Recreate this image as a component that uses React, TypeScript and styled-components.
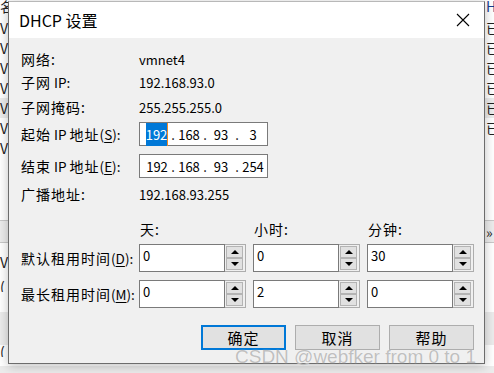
import React, { FC } from 'react';
import styled, { createGlobalStyle } from 'styled-components';

const GlobalStyle = createGlobalStyle`
  html, body {
    margin: 0;
    padding: 0;
    background: #f3f3f3;
  }
  body {
    font-family: "Noto Sans CJK SC", "Noto Sans", sans-serif;
    color: #000;
  }
`;

const UI_FONT = `"Noto Sans CJK SC", "Noto Sans", sans-serif`;

const Desktop = styled.div`
  position: relative;
  width: 494px;
  height: 373px;
  overflow: hidden;
  background: #ececec;
`;

// the list window behind the dialog, only its edges show
const Backdrop = styled.div`
  display: flex;
  flex-direction: column;
  margin-top: -6px;
  font-family: ${UI_FONT};
  font-size: 14px;
  background: #fff;
  height: 372px;
`;

const BackRow = styled.div<{ $h?: number; $shade?: boolean; $line?: boolean }>`
  display: grid;
  grid-template-columns: 486px 1fr;
  height: ${(p) => p.$h ?? 20}px;
  line-height: ${(p) => p.$h ?? 20}px;
  background: ${(p) => (p.$shade ? '#ececec' : 'transparent')};
  border-top: ${(p) => (p.$line ? '1px solid #c8c8c8' : 'none')};
  box-sizing: border-box;
  white-space: nowrap;
  overflow: hidden;
`;

const BackCell = styled.span<{ $blue?: boolean }>`
  color: ${(p) => (p.$blue ? '#1a3d8f' : '#222')};
  overflow: hidden;
`;

const Dialog = styled.div`
  position: absolute;
  left: 8px;
  top: 1px;
  width: 477px;
  height: 363px;
  box-sizing: border-box;
  border: 1px solid #6c6c6c;
  border-top-color: #b8b8b8;
  display: flex;
  flex-direction: column;
  background: #f0f0f0;
  box-shadow: 0 2px 10px rgba(0, 0, 0, 0.25);
  font-family: ${UI_FONT};
`;

const TitleBar = styled.div`
  height: 36px;
  background: #fff;
  display: flex;
  align-items: center;
  padding-left: 10px;
`;

const Title = styled.span`
  flex: 1;
  font-size: 16px;
  color: #000;
`;

const CloseButton = styled.div`
  width: 42px;
  height: 36px;
  display: flex;
  align-items: center;
  justify-content: center;
`;

const Body = styled.div`
  flex: 1;
  padding: 10px 10px 0 12px;
  display: flex;
  flex-direction: column;
`;

const Row = styled.div<{ $h: number; $mt?: number }>`
  display: grid;
  grid-template-columns: 118px 1fr;
  align-items: center;
  height: ${(p) => p.$h}px;
  margin-top: ${(p) => p.$mt ?? 0}px;
`;

const Label = styled.span`
  font-size: 14px;
  letter-spacing: 1px;
  white-space: nowrap;
`;

// latin parts of a label keep their natural spacing
const Lat = styled.span`
  letter-spacing: 0;
  font-size: 13.5px;
`;

const Value = styled.span`
  font-size: 13px;
`;

const Key = styled.u`
  text-underline-offset: 2px;
`;

const IpBox = styled.div`
  width: 129px;
  height: 24px;
  box-sizing: border-box;
  border: 1px solid #7a7a7a;
  background: #fff;
  display: flex;
  align-items: center;
  padding-left: 4px;
  font-size: 13px;
`;

const Octet = styled.span`
  width: 26px;
  text-align: center;
`;

const Dot = styled.span`
  width: 6px;
  text-align: center;
`;

const Selected = styled.span`
  background: #0078d7;
  color: #fff;
  padding: 2px 0;
  border-right: 1px solid #f08a24;
`;

const LeaseGrid = styled.div<{ $h: number; $mt: number }>`
  display: grid;
  grid-template-columns: 111px repeat(3, 107px);
  column-gap: 7px;
  align-items: center;
  height: ${(p) => p.$h}px;
  margin-top: ${(p) => p.$mt}px;
`;

const Head = styled.span`
  font-size: 14px;
  letter-spacing: 1px;
  padding-left: 1px;
`;

const SpinBox = styled.div`
  height: 28px;
  box-sizing: border-box;
  display: flex;
  border: 1px solid #adadad;
  background: #f0f0f0;
`;

const SpinText = styled.div`
  flex: 1;
  margin: -1px 0 -1px -1px;
  border: 1px solid #7a7a7a;
  background: #fff;
  font-size: 13px;
  line-height: 16px;
  padding: 3px 3px;
`;

const SpinButtons = styled.div`
  width: 17px;
  padding: 1px 2px 1px 1px;
  display: flex;
  flex-direction: column;
`;

const SpinButton = styled.div`
  flex: 1;
  box-sizing: border-box;
  border: 1px solid #b4b4b4;
  background: #e1e1e1;
  display: flex;
  align-items: center;
  justify-content: center;
`;

const Arrow = styled.span<{ $down?: boolean }>`
  width: 0;
  height: 0;
  border-left: 4px solid transparent;
  border-right: 4px solid transparent;
  ${(p) => (p.$down ? 'border-top: 4px solid #000;' : 'border-bottom: 4px solid #000;')}
`;

const Buttons = styled.div`
  display: flex;
  justify-content: flex-end;
  gap: 9px;
  margin-top: 17px;
`;

const Button = styled.div<{ $default?: boolean }>`
  width: 85px;
  height: 25px;
  box-sizing: border-box;
  border: ${(p) => (p.$default ? '2px solid #0078d7' : '1px solid #adadad')};
  background: #e1e1e1;
  display: flex;
  align-items: center;
  justify-content: center;
  font-size: 15px;
  letter-spacing: 1px;
`;

const Watermark = styled.div`
  position: absolute;
  left: 235px;
  top: 346px;
  font-family: "Liberation Sans", Arial, sans-serif;
  font-size: 19px;
  color: rgba(165, 165, 165, 0.7);
  text-shadow: 0 0 1px rgba(255, 255, 255, 0.9);
  white-space: nowrap;
`;

const CloseIcon: FC = () => (
  <svg width="14" height="14" viewBox="0 0 14 14">
    <path d="M1 1 L13 13 M13 1 L1 13" stroke="#000" strokeWidth="1.1" fill="none" />
  </svg>
);

const Spin: FC<{ value: string }> = ({ value }) => (
  <SpinBox>
    <SpinText>{value}</SpinText>
    <SpinButtons>
      <SpinButton>
        <Arrow />
      </SpinButton>
      <SpinButton>
        <Arrow $down />
      </SpinButton>
    </SpinButtons>
  </SpinBox>
);

const backRows: Array<[string, boolean]> = [
  ['r0', false],
  ['r1', false],
  ['r2', false],
  ['r3', false],
  ['r4', true],
  ['r5', false],
  ['r6', false],
];

const App: FC = () => (
  <>
    <GlobalStyle />
    <Desktop>
      <Backdrop>
        <BackRow $h={24}>
          <BackCell>名</BackCell>
          <BackCell $blue>H</BackCell>
        </BackRow>
        {backRows.map(([key, shade], i) => (
          <BackRow key={key} $shade={shade}>
            <BackCell>V</BackCell>
            <BackCell>{i < 6 ? '已' : ''}</BackCell>
          </BackRow>
        ))}
        <BackRow $h={62} />
        <BackRow $h={22} $line $shade>
          <BackCell />
          <BackCell>»</BackCell>
        </BackRow>
        <BackRow $h={38} $line>
          <BackCell>V</BackCell>
          <BackCell />
        </BackRow>
        <BackRow $h={12}>
          <BackCell>(</BackCell>
          <BackCell />
        </BackRow>
        <BackRow $h={20} />
        <BackRow $h={33} $shade />
        <BackRow $h={12}>
          <BackCell>(</BackCell>
          <BackCell />
        </BackRow>
      </Backdrop>

      <Dialog>
        <TitleBar>
          <Title>DHCP 设置</Title>
          <CloseButton>
            <CloseIcon />
          </CloseButton>
        </TitleBar>
        <Body>
          <Row $h={22}>
            <Label>网络:</Label>
            <Value>vmnet4</Value>
          </Row>
          <Row $h={24}>
            <Label>
              子网<Lat> IP:</Lat>
            </Label>
            <Value>192.168.93.0</Value>
          </Row>
          <Row $h={26}>
            <Label>子网掩码:</Label>
            <Value>255.255.255.0</Value>
          </Row>
          <Row $h={24} $mt={2}>
            <Label>
              起始<Lat> IP </Lat>地址
              <Lat>
                (<Key>S</Key>):
              </Lat>
            </Label>
            <IpBox>
              <Octet>
                <Selected>192</Selected>
              </Octet>
              <Dot>.</Dot>
              <Octet>168</Octet>
              <Dot>.</Dot>
              <Octet>93</Octet>
              <Dot>.</Dot>
              <Octet>3</Octet>
            </IpBox>
          </Row>
          <Row $h={24} $mt={8}>
            <Label>
              结束<Lat> IP </Lat>地址
              <Lat>
                (<Key>E</Key>):
              </Lat>
            </Label>
            <IpBox>
              <Octet>192</Octet>
              <Dot>.</Dot>
              <Octet>168</Octet>
              <Dot>.</Dot>
              <Octet>93</Octet>
              <Dot>.</Dot>
              <Octet>254</Octet>
            </IpBox>
          </Row>
          <Row $h={24} $mt={4}>
            <Label>广播地址:</Label>
            <Value>192.168.93.255</Value>
          </Row>

          <LeaseGrid $h={22} $mt={12}>
            <span />
            <Head>天:</Head>
            <Head>小时:</Head>
            <Head>分钟:</Head>
          </LeaseGrid>
          <LeaseGrid $h={28} $mt={4}>
            <Label>
              默认租用时间
              <Lat>
                (<Key>D</Key>):
              </Lat>
            </Label>
            <Spin value="0" />
            <Spin value="0" />
            <Spin value="30" />
          </LeaseGrid>
          <LeaseGrid $h={28} $mt={8}>
            <Label>
              最长租用时间
              <Lat>
                (<Key>M</Key>):
              </Lat>
            </Label>
            <Spin value="0" />
            <Spin value="2" />
            <Spin value="0" />
          </LeaseGrid>

          <Buttons>
            <Button $default>确定</Button>
            <Button>取消</Button>
            <Button>帮助</Button>
          </Buttons>
        </Body>
      </Dialog>
      <Watermark>CSDN @webfker from 0 to 1</Watermark>
    </Desktop>
  </>
);

export default App;
